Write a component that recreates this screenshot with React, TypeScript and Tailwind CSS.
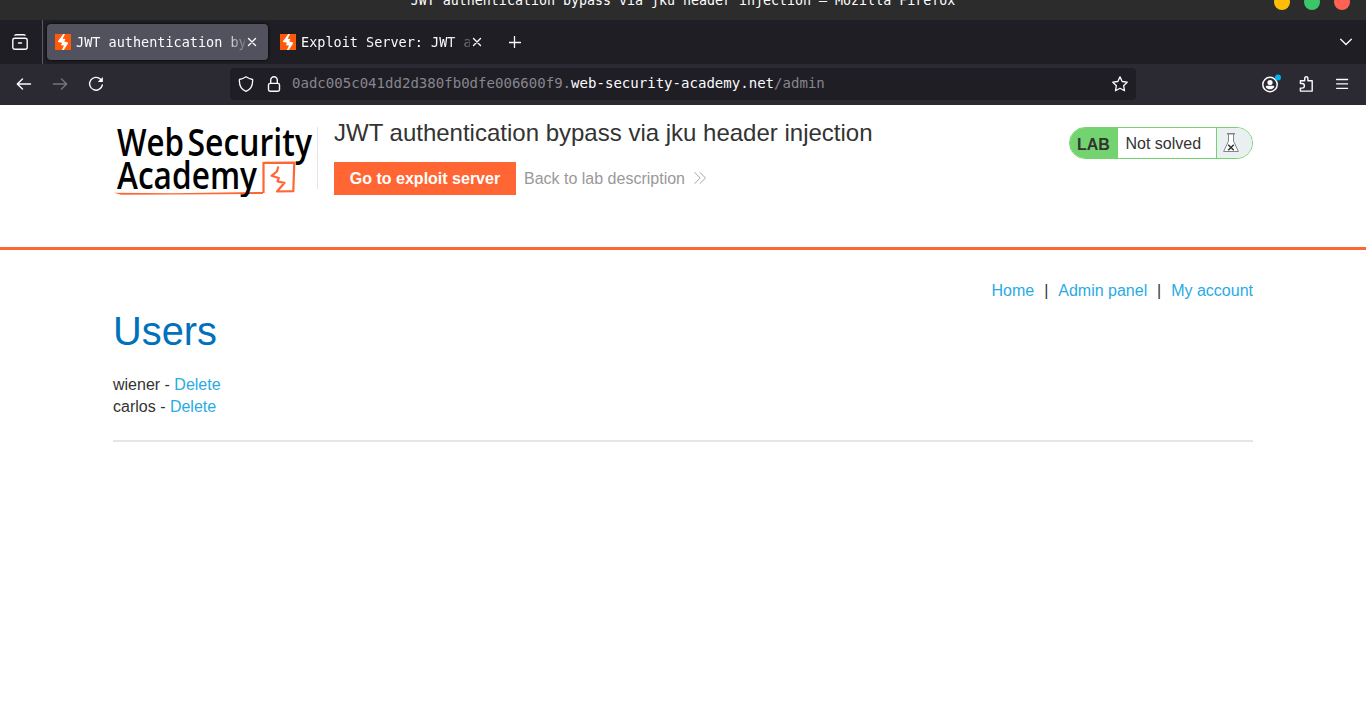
import React from 'react';

function BoltFavicon() {
  return (
    <svg className="size-4 shrink-0" viewBox="0 0 16 16">
      <path fill="#ff5a0a" d="M0 0h16v16H0z" />
      <path fill="#fff" d="M8.300 0 3 7.200v.9l4 .7L6 11.200l3 .3L6.900 16h1.900L13 9.400v-.9L9.300 7.500l1.100-2.500-2.700-.3L10 0z" />
    </svg>
  );
}

function CloseIcon() {
  return (
    <svg className="ml-px size-3 shrink-0" viewBox="0 0 12 12" stroke="#fbfbfe" strokeWidth="1.4" strokeLinecap="round">
      <path d="m2.500 2.500 7 7M9.500 2.500l-7 7" />
    </svg>
  );
}

function Tab({ title, active }: { title: string; active?: boolean }) {
  return (
    <div
      className={
        'flex h-9 w-[221px] items-center rounded pl-2 text-[13.5px] text-[#fbfbfe] ' +
        (active ? 'bg-[#52525e] shadow-[0_0_3px_#000]' : '')
      }
    >
      <BoltFavicon />
      <span className="ml-[5px] h-5 w-[169px] shrink-0 overflow-hidden whitespace-pre leading-5 [mask-image:linear-gradient(to_right,#000_88%,transparent_103%)]">
        {title}
      </span>
      <CloseIcon />
    </div>
  );
}

function TabBar() {
  return (
    <div className="flex h-11 items-center bg-[#1f1e25]">
      <div className="flex h-full w-[43px] items-center border-r border-[#5b5a63] pl-3">
        <svg className="size-4" viewBox="0 0 16 16" fill="none" stroke="#fbfbfe" strokeWidth="1.4" strokeLinecap="round">
          <path d="M3 1.2c.6-.4 1-.5 1.6-.5h6.8c.6 0 1 .1 1.6.5M6.5 9h3" />
          <rect x=".8" y="4.3" width="14.4" height="11" rx="2" />
        </svg>
      </div>
      <div className="ml-1 flex gap-1">
        <Tab title="JWT authentication by" active />
        <Tab title="Exploit Server: JWT a" />
      </div>
      <svg className="ml-4 size-3" viewBox="0 0 12 12" stroke="#fbfbfe" strokeWidth="1.3" strokeLinecap="round">
        <path d="M5.500 .5v11M0 6.500h11.500" />
      </svg>
      <svg className="ml-auto mr-[14px] h-2 w-3" viewBox="0 0 12 8" fill="none" stroke="#fbfbfe" strokeWidth="1.3" strokeLinecap="round">
        <path d="m.7 1.2 5.3 5.3 5.3-5.3" />
      </svg>
    </div>
  );
}

function NavBar() {
  return (
    <div className="flex h-[41px] items-center bg-[#2b2a33] pb-px text-[#fbfbfe]">
      <svg className="ml-4 size-4" viewBox="0 0 16 16" fill="none" stroke="currentColor" strokeWidth="1.4" strokeLinecap="round" strokeLinejoin="round">
        <path d="M14.500 8H1.500M6.500 2.900 1.300 8l5.200 5.100" />
      </svg>
      <svg className="ml-5 size-4 text-[#75747c]" viewBox="0 0 16 16" fill="none" stroke="currentColor" strokeWidth="1.4" strokeLinecap="round" strokeLinejoin="round">
        <path d="M1.300 8h13M9.500 2.900 14.700 8l-5.200 5.100" />
      </svg>
      <svg className="ml-5 size-4" viewBox="0 0 16 16" fill="none" stroke="currentColor" strokeWidth="1.4" strokeLinecap="round">
        <path d="M14.300 9A6.400 6.400 0 1 1 12.600 3.300" />
        <path d="M14.900.9v5.200H9.700z" fill="currentColor" stroke="none" />
      </svg>
      <div className="ml-[126px] flex h-8 w-[906px] items-center rounded bg-[#1f1e25] px-2">
        <svg className="size-4" viewBox="0 0 16 16" fill="none" stroke="currentColor" strokeWidth="1.3" strokeLinejoin="round">
          <path d="M8 .8c2.400 1.600 4.200 2.300 6.600 2.700.3 5-1.500 10-6.600 11.900C2.900 13.500 1.100 8.500 1.400 3.500 3.800 3.100 5.600 2.400 8 .8z" />
        </svg>
        <svg className="ml-3 size-4" viewBox="0 0 16 16" fill="none" stroke="currentColor" strokeWidth="1.4">
          <rect x="2.500" y="7.400" width="11" height="7.800" rx="1.600" />
          <path d="M4.700 7.400V4.300a3.300 3.500 0 0 1 6.600 0v3.100" />
        </svg>
        <span className="ml-[10px] whitespace-pre pb-0.5 text-[14.06px] leading-5 text-[#87868e]">
          0adc005c041dd2d380fb0dfe006600f9.<span className="text-[#fbfbfe]">web-security-academy.net</span>/admin
        </span>
        <svg className="ml-auto size-4" viewBox="0 0 16 16" fill="none" stroke="currentColor" strokeWidth="1.3" strokeLinejoin="round">
          <path d="m8 .9 2.200 4.600 5 .7-3.600 3.500.9 5L8 12.300l-4.500 2.400.9-5L.8 6.200l5-.7z" />
        </svg>
      </div>
      <svg className="ml-[125px] mb-px h-5 w-5" viewBox="0 0 20 20" fill="none">
        <circle cx="9" cy="10.500" r="7.200" stroke="currentColor" strokeWidth="1.500" />
        <circle cx="9" cy="8.500" r="2.600" fill="currentColor" />
        <path d="M4.700 13c0-.9.600-1.300 1.400-1.300h5.800c.8 0 1.400.4 1.400 1.300-.9 1.500-2.500 2.300-4.300 2.300S5.600 14.500 4.700 13z" fill="currentColor" />
        <circle cx="17" cy="3.500" r="3" fill="#00b3f4" />
      </svg>
      <svg className="ml-[18px] size-4" viewBox="0 0 16 16" fill="none" stroke="currentColor" strokeWidth="1.400" strokeLinejoin="round">
        <path d="M1.400 7.500V4.800h4.300V2.700a1.600 1.900 0 0 1 3.200 0v2.100h4.300v10.300H1.400v-3h1.700a1.800 1.800 0 0 0 0-4.600z" />
      </svg>
      <svg className="ml-[19px] size-4" viewBox="0 0 16 16" stroke="currentColor" strokeWidth="1.300" strokeLinecap="round">
        <path d="M2.600 3.500h11M2.600 7.800h11M2.600 12.300h11" />
      </svg>
    </div>
  );
}

function Logo() {
  return (
    <svg className="h-[92px] w-[204px] shrink-0" viewBox="0 0 204 92" fontFamily="'Open Sans', 'Noto Sans', sans-serif" fontWeight="600" fontSize="38">
      <g fill="#000">
        <text x="4" y="51" textLength="67" lengthAdjust="spacingAndGlyphs">Web</text>
        <text x="74.500" y="51" textLength="124.500" lengthAdjust="spacingAndGlyphs">Security</text>
      </g>
      <path d="M1 87.700 60 88.200 150 87v2l-90 .6L8 89.800z" fill="#ff6633" />
      <path
        d="M150.500 88V57.800l30.800-.2-1 28.600-16.300.3 7.500-8.700-7-1.300 1.300-3.500-7.300-2.200 5.400-4.300 1.400-5"
        fill="none"
        stroke="#ff6633"
        strokeWidth="2.200"
        strokeLinejoin="round"
      />
      <text x="4" y="83.500" textLength="140" lengthAdjust="spacingAndGlyphs" fill="#000">Academy</text>
    </svg>
  );
}

function LabStatus() {
  return (
    <div className="ml-auto mt-[22px] flex h-8 w-[184px] overflow-hidden rounded-full border border-[#72d36f] text-[#333332]">
      <span className="w-12 bg-[#72d36f] pl-[7px] text-base font-bold leading-[33px]">LAB</span>
      <span className="w-[98px] whitespace-nowrap pl-[7.500px] text-base leading-[31px]">Not solved</span>
      <span className="flex flex-1 border-l border-[#72d36f] bg-[#eaeff2] pl-[5px] pt-[5px]">
        <svg className="h-5 w-[18px]" viewBox="0 0 18 20" fill="none">
          <path d="M6.500 1v7L1.600 18.500h14.800L11.500 8V1" fill="#fff" stroke="#80868a" />
          <path d="M5 .8h8" stroke="#80868a" strokeWidth="1.500" />
          <path d="m6.200 11.700 5.600 5.600M11.800 11.700l-5.600 5.600" stroke="#333332" strokeWidth="1.500" />
        </svg>
      </span>
    </div>
  );
}

function LabHeader() {
  return (
    <header className="h-[145px] border-b-[3px] border-[#ff6633] px-[113px]">
      <div className="flex">
        <Logo />
        <div className="mt-[22px] h-[62px] w-px bg-[#e5e5e5]" />
        <div className="ml-4 pt-[11px]">
          <h2 className="whitespace-nowrap text-2xl leading-[34px] text-[#333332]">JWT authentication bypass via jku header injection</h2>
          <div className="mt-3 flex items-center">
            <a className="h-[33px] w-[182px] bg-[#ff6633] text-center text-base font-bold leading-[33px] text-white">Go to exploit server</a>
            <a className="ml-2 flex items-center text-base text-[#999]">
              Back to lab description
              <svg className="mb-px ml-[9px] h-3 w-3" viewBox="0 0 12 12" fill="none" stroke="#999" strokeWidth=".9">
                <path d="m.5.300 5.700 5.700-5.700 5.700M5.800.300 11.500 6l-5.700 5.700" />
              </svg>
            </a>
          </div>
        </div>
        <LabStatus />
      </div>
    </header>
  );
}

export default function App() {
  return (
    <div className="flex h-[722px] w-[1366px] flex-col overflow-hidden bg-white font-['Liberation_Sans',Arial,sans-serif]">
      <div className="font-['DejaVu_Sans_Mono',monospace]">
        <div className="relative h-5 overflow-hidden bg-[#2c2c2c] text-white">
          <div className="-mt-[9px] whitespace-pre text-center text-[13.3px] leading-5">JWT authentication bypass via jku header injection — Mozilla Firefox</div>
          <div className="absolute -top-1.5 right-4 flex gap-[14px]">
            <i className="size-4 rounded-full bg-[#ffbd08]" />
            <i className="size-4 rounded-full bg-[#39c768]" />
            <i className="size-4 rounded-full bg-[#ff6152]" />
          </div>
        </div>
        <TabBar />
        <NavBar />
      </div>
      <LabHeader />
      <main className="px-[113px] text-[#333332]">
        <nav className="mt-[31px] flex h-[20px] justify-end text-base leading-[20px] text-[#29abe2]">
          <a>Home</a>
          <span className="w-6 text-center text-[#333332]">|</span>
          <a>Admin panel</a>
          <span className="w-6 text-center text-[#333332]">|</span>
          <a>My account</a>
        </nav>
        <h1 className="mt-[5px] text-[39.800px] leading-[50px] text-[#0071bc]">Users</h1>
        <div className="mt-[18px] text-base leading-[22px]">
          <div>wiener - <a className="text-[#29abe2]">Delete</a></div>
          <div>carlos - <a className="text-[#29abe2]">Delete</a></div>
        </div>
        <hr className="mt-[22px] border-t-2 border-[#e5e5e5]" />
      </main>
    </div>
  );
}
